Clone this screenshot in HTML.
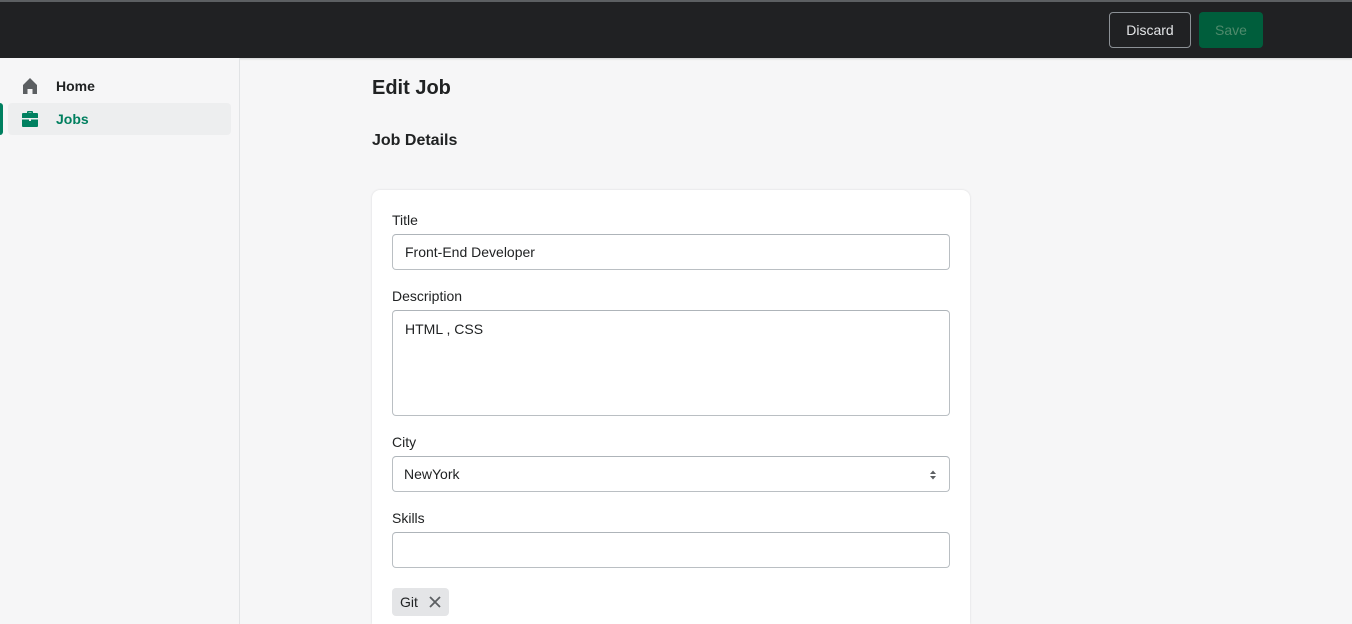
<!DOCTYPE html>
<html><head><meta charset="utf-8"><style>
*{box-sizing:border-box;margin:0;padding:0}
html,body{width:1352px;height:624px;overflow:hidden}
body{background:#f6f6f7;font-family:"Liberation Sans",sans-serif;color:#202223;position:relative}
.top{position:absolute;left:0;top:0;width:1352px;height:58px;background:#202123;border-top:2px solid #5c5f62;box-shadow:0 1px 2px rgba(0,0,0,.15)}
.btn{position:absolute;top:10px;height:36px;border-radius:4px;font-size:14px;display:flex;align-items:center;justify-content:center}
.d{left:1109px;width:82px;border:1px solid #8c9196;color:#e3e5e7}
.s{left:1199px;width:64px;background:#005e3c;color:#4f8a6c}
.side{position:absolute;left:0;top:58px;width:240px;height:566px;border-right:1px solid #e1e3e5;background:#f6f6f7}
.item{position:absolute;left:8px;width:223px;height:32px;border-radius:4px;font-size:14px;font-weight:bold;display:flex;align-items:center}
.item svg{position:absolute;left:12px}
.item span{position:absolute;left:48px}
.h1{position:absolute;left:372px;top:77px;font-size:20px;font-weight:bold}
.h2{position:absolute;left:372px;top:132px;font-size:16px;font-weight:bold}
.card{position:absolute;left:372px;top:190px;width:598px;height:434px;background:#fff;border-radius:8px 8px 0 0;box-shadow:0 0 2px rgba(0,0,0,.12)}
.lbl{position:absolute;left:20px;font-size:14px}
.inp{position:absolute;left:20px;width:558px;height:36px;border:1px solid #babfc3;border-top-color:#aeb4b9;border-radius:4px;font-size:14px;padding-left:12px;display:flex;align-items:center}
.tag{position:absolute;left:20px;top:398px;width:57px;height:28px;background:#e4e5e7;border-radius:4px;font-size:14px;display:flex;align-items:center;padding-left:8px;color:#202223}
</style></head><body>
<div class="top"><div class="btn d">Discard</div><div class="btn s">Save</div></div>
<div class="side">
<div class="item" style="top:12px"><svg width="20" height="20" viewBox="0 0 20 20"><path d="M3 9 L10 2 L17 9 V18 H12.5 V13 H7.5 V18 H3 Z" fill="#5c5f62"/></svg><span>Home</span></div>
<div style="position:absolute;left:0;top:45px;width:3px;height:32px;background:#008060;border-radius:0 3px 3px 0"></div>
<div class="item" style="top:45px;background:#edeeef;color:#007f5f"><svg width="20" height="20" viewBox="0 0 20 20"><path d="M7 4 V3 Q7 2 8 2 H12 Q13 2 13 3 V4 H17 Q18 4 18 5 V9 H2 V5 Q2 4 3 4 Z M8.5 3.5 V4 H11.5 V3.5 Z" fill="#008060"/><path d="M2 10.5 H9 V12 H11 V10.5 H18 V17 Q18 18 17 18 H3 Q2 18 2 17 Z" fill="#008060"/></svg><span>Jobs</span></div>
</div>
<div class="h1">Edit Job</div>
<div class="h2">Job Details</div>
<div class="card">
<div class="lbl" style="top:22px">Title</div>
<div class="inp" style="top:44px">Front-End Developer</div>
<div class="lbl" style="top:98px">Description</div>
<div class="inp" style="top:120px;height:106px;align-items:flex-start;padding-top:10px">HTML , CSS</div>
<div class="lbl" style="top:244px">City</div>
<div class="inp" style="top:266px;padding-left:11px">NewYork<svg style="position:absolute;right:12px;top:12px" width="8" height="12" viewBox="0 0 8 12"><path d="M1 5 L4 1.5 L7 5 Z M1 7 L4 10.5 L7 7 Z" fill="#5c5f62"/></svg></div>
<div class="lbl" style="top:320px">Skills</div>
<div class="inp" style="top:342px"></div>
<div class="tag">Git<svg style="position:absolute;left:37px;top:8px" width="12" height="12" viewBox="0 0 12 12"><path d="M1 1 L11 11 M11 1 L1 11" stroke="#5c5f62" stroke-width="1.8"/></svg></div>
</div>
</body></html>
